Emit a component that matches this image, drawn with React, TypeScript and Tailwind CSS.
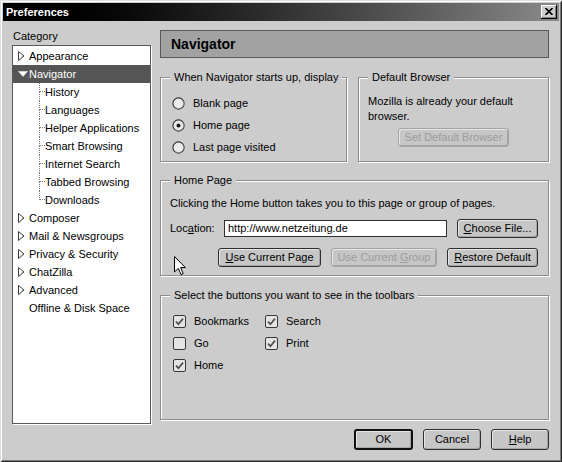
import React from "react";

function Btn({
  children,
  className = "",
  disabled = false,
  isDefault = false,
}: {
  children: React.ReactNode;
  className?: string;
  disabled?: boolean;
  isDefault?: boolean;
}) {
  const border = disabled
    ? "border border-[#a4a4a4] text-[#9c9c9c]"
    : isDefault
    ? "border-2 border-[#111111] text-black"
    : "border border-[#2e2e2e] text-black";
  return (
    <div
      className={`flex items-center justify-center rounded-[3px] bg-[#c6c6c6] shadow-[inset_1px_1px_0_#e6e6e6,inset_-1px_-1px_0_#a6a6a6] leading-[13px] ${border} ${className}`}
    >
      <span className="whitespace-pre">{children}</span>
    </div>
  );
}

function U({ children }: { children: React.ReactNode }) {
  return <span className="underline underline-offset-1">{children}</span>;
}

function Group({
  title,
  className = "",
  children,
}: {
  title: string;
  className?: string;
  children?: React.ReactNode;
}) {
  return (
    <div
      className={`border border-[#8c8c8c] shadow-[1px_1px_0_#ffffff,inset_1px_1px_0_#ffffff] ${className}`}
    >
      <div className="-mt-[7px] ml-[9px] w-fit px-[4px] bg-[#cccccc] leading-[13px]">
        {title}
      </div>
      {children}
    </div>
  );
}

function Radio({ checked = false }: { checked?: boolean }) {
  return (
    <svg width="13" height="13" viewBox="0 0 13 13" className="shrink-0">
      <circle cx="6.5" cy="6.5" r="5.6" fill="#ececec" stroke="#2e2e2e" strokeWidth="1.1" />
      <path d="M2.6 9.8 A5 5 0 0 0 10.4 3.2" fill="none" stroke="#9a9a9a" strokeWidth="0.8" />
      {checked && <circle cx="6.5" cy="6.5" r="2" fill="#111111" />}
    </svg>
  );
}

function Check({ checked = false }: { checked?: boolean }) {
  return (
    <svg width="13" height="13" viewBox="0 0 13 13" className="shrink-0">
      <rect x="0.5" y="0.5" width="12" height="12" rx="1.5" fill="#e4e4e4" stroke="#383838" strokeWidth="1" />
      {checked && (
        <path d="M3 6.6 L5.4 9.2 L10 3.6" fill="none" stroke="#505050" strokeWidth="1.7" />
      )}
    </svg>
  );
}

function ClosedTwisty() {
  return (
    <svg width="7" height="10" viewBox="0 0 7 10">
      <polygon points="0.5,0.5 6,5 0.5,9.5" fill="#ffffff" stroke="#3a3a3a" strokeWidth="1" />
      <line x1="1.5" y1="8" x2="5" y2="5" stroke="#9a9a9a" strokeWidth="0.8" />
    </svg>
  );
}

function OpenTwisty() {
  return (
    <svg width="10" height="6" viewBox="0 0 10 6">
      <polygon points="0.5,0.5 9.5,0.5 5,5.5" fill="#ffffff" stroke="#dcdcdc" strokeWidth="0.8" />
    </svg>
  );
}

type Item = {
  label: string;
  kind: "closed" | "open" | "leaf" | "child";
  last?: boolean;
  selected?: boolean;
};

const items: Item[] = [
  { label: "Appearance", kind: "closed" },
  { label: "Navigator", kind: "open", selected: true },
  { label: "History", kind: "child" },
  { label: "Languages", kind: "child" },
  { label: "Helper Applications", kind: "child" },
  { label: "Smart Browsing", kind: "child" },
  { label: "Internet Search", kind: "child" },
  { label: "Tabbed Browsing", kind: "child" },
  { label: "Downloads", kind: "child", last: true },
  { label: "Composer", kind: "closed" },
  { label: "Mail & Newsgroups", kind: "closed" },
  { label: "Privacy & Security", kind: "closed" },
  { label: "ChatZilla", kind: "closed" },
  { label: "Advanced", kind: "closed" },
  { label: "Offline & Disk Space", kind: "leaf" },
];

function TreeRow({ item }: { item: Item }) {
  if (item.kind === "child") {
    return (
      <div className="flex h-[18px] items-stretch">
        <div className="w-[26px] shrink-0" />
        <div className="flex w-[6px] shrink-0 flex-col">
          <div className="h-[9px] border-l border-b border-dotted border-[#7a7a7a]" />
          <div
            className={
              item.last ? "flex-1" : "flex-1 border-l border-dotted border-[#7a7a7a]"
            }
          />
        </div>
        <span className="flex items-center">{item.label}</span>
      </div>
    );
  }
  return (
    <div
      className={`flex h-[18px] items-center pl-[5px] ${
        item.selected ? "bg-[#555555] text-white" : ""
      }`}
    >
      <div className="flex w-[11px] shrink-0 items-center">
        {item.kind === "closed" && <ClosedTwisty />}
        {item.kind === "open" && <OpenTwisty />}
      </div>
      <span>{item.label}</span>
    </div>
  );
}

export default function App() {
  return (
    <div className="h-[462px] w-[562px] overflow-hidden bg-[#cccccc] p-[3px] font-['Liberation_Sans',Arial,sans-serif] text-[11px] text-black shadow-[inset_1px_1px_0_#dedede,inset_-1px_-1px_0_#2a2a2a,inset_2px_2px_0_#ffffff,inset_-2px_-2px_0_#7a7a7a]">
      {/* Title bar */}
      <div className="flex h-[18px] items-center justify-between bg-linear-to-r from-[#000000] to-[#8a8a8a] pl-[3px] pr-[2px]">
        <span className="text-[11px] font-bold text-white">Preferences</span>
        <div className="flex h-[14px] w-[16px] items-center justify-center bg-[#cccccc] shadow-[inset_-1px_-1px_0_#000000,inset_1px_1px_0_#ffffff,inset_-2px_-2px_0_#808080]">
          <svg width="8" height="7" viewBox="0 0 8 7" className="-mt-[1px] -ml-[1px]">
            <path d="M0.5 0 L7.5 7 M7.5 0 L0.5 7" stroke="#000000" strokeWidth="1.6" />
          </svg>
        </div>
      </div>

      <div className="pl-[9px] pr-[10px] pt-[8px]">
        <div className="flex">
          {/* Left column */}
          <div className="w-[139px] shrink-0">
            <div className="h-[13px] pl-[1px] pt-[1px] leading-[13px]">Category</div>
            <div className="mt-[3px] h-[379px] border border-[#5a5a5a] bg-white pt-[1px] shadow-[1px_1px_0_#ffffff]">
              {items.map((it) => (
                <TreeRow key={it.label} item={it} />
              ))}
            </div>
          </div>

          {/* Right column */}
          <div className="ml-[9px] flex-1">
            <div className="mt-[1px] flex h-[28px] items-center border border-[#585858] bg-[#a2a2a2] pl-[10px] text-[14px] font-bold">
              Navigator
            </div>

            <div className="mt-[19px] flex gap-[11px]">
              <Group title="When Navigator starts up, display" className="h-[85px] w-[187px]">
                <div className="mt-[8px] flex flex-col pl-[11px]">
                  <div className="flex h-[22px] items-center gap-[8px]">
                    <Radio />
                    <span>Blank page</span>
                  </div>
                  <div className="flex h-[22px] items-center gap-[8px]">
                    <Radio checked />
                    <span>Home page</span>
                  </div>
                  <div className="flex h-[22px] items-center gap-[8px]">
                    <Radio />
                    <span>Last page visited</span>
                  </div>
                </div>
              </Group>
              <Group title="Default Browser" className="h-[85px] flex-1">
                <div className="mt-[10px] pl-[9px] leading-[15px]">
                  Mozilla is already your default
                  <br />
                  browser.
                </div>
                <Btn disabled className="mx-auto mt-[4px] h-[19px] w-[111px]">
                  Set Default Browser
                </Btn>
              </Group>
            </div>

            <Group title="Home Page" className="relative mt-[18px] h-[96px]">
              <div className="mt-[10px] pl-[9px] leading-[13px]">
                Clicking the Home button takes you to this page or group of pages.
              </div>
              <div className="mt-[9px] flex h-[19px] items-center pl-[9px] pr-[10px]">
                <span className="w-[54px] shrink-0">
                  Loc<U>a</U>tion:
                </span>
                <div className="flex h-[17px] flex-1 items-center border border-[#2e2e2e] bg-white pl-[3px]">
                  http://www.netzeitung.de
                </div>
                <Btn className="ml-[10px] h-[19px] w-[81px]">
                  <U>C</U>hoose File...
                </Btn>
              </div>
              <div className="mt-[10px] flex justify-end gap-[10px] pr-[10px]">
                <Btn className="h-[19px] w-[103px]">
                  <U>U</U>se Current Page
                </Btn>
                <Btn disabled className="h-[19px] w-[106px]">
                  Use Current <U>G</U>roup
                </Btn>
                <Btn className="h-[19px] w-[91px]">
                  <U>R</U>estore Default
                </Btn>
              </div>
              <svg
                width="12"
                height="20"
                viewBox="0 0 12 20"
                className="absolute left-[13px] top-[75px]"
              >
                <path
                  d="M0.5 0.5 L0.5 16 L4.3 12.4 L7 18.6 L9.2 17.6 L6.6 11.6 L11.4 11.6 Z"
                  fill="#ffffff"
                  stroke="#000000"
                  strokeWidth="1"
                  strokeLinejoin="miter"
                />
              </svg>
            </Group>

            <Group
              title="Select the buttons you want to see in the toolbars"
              className="mt-[19px] h-[125px]"
            >
              <div className="mt-[8px] grid grid-cols-[92px_auto] pl-[12px]">
                <div className="flex h-[22px] items-center gap-[8px]">
                  <Check checked />
                  <span>Bookmarks</span>
                </div>
                <div className="flex h-[22px] items-center gap-[8px]">
                  <Check checked />
                  <span>Search</span>
                </div>
                <div className="flex h-[22px] items-center gap-[8px]">
                  <Check />
                  <span>Go</span>
                </div>
                <div className="flex h-[22px] items-center gap-[8px]">
                  <Check checked />
                  <span>Print</span>
                </div>
                <div className="flex h-[22px] items-center gap-[8px]">
                  <Check checked />
                  <span>Home</span>
                </div>
              </div>
            </Group>
          </div>
        </div>

        <div className="mt-[5px] flex justify-end gap-[10px]">
          <Btn isDefault className="h-[21px] w-[59px]">
            OK
          </Btn>
          <Btn className="h-[21px] w-[58px]">Cancel</Btn>
          <Btn className="h-[21px] w-[58px]">
            <U>H</U>elp
          </Btn>
        </div>
      </div>
    </div>
  );
}
